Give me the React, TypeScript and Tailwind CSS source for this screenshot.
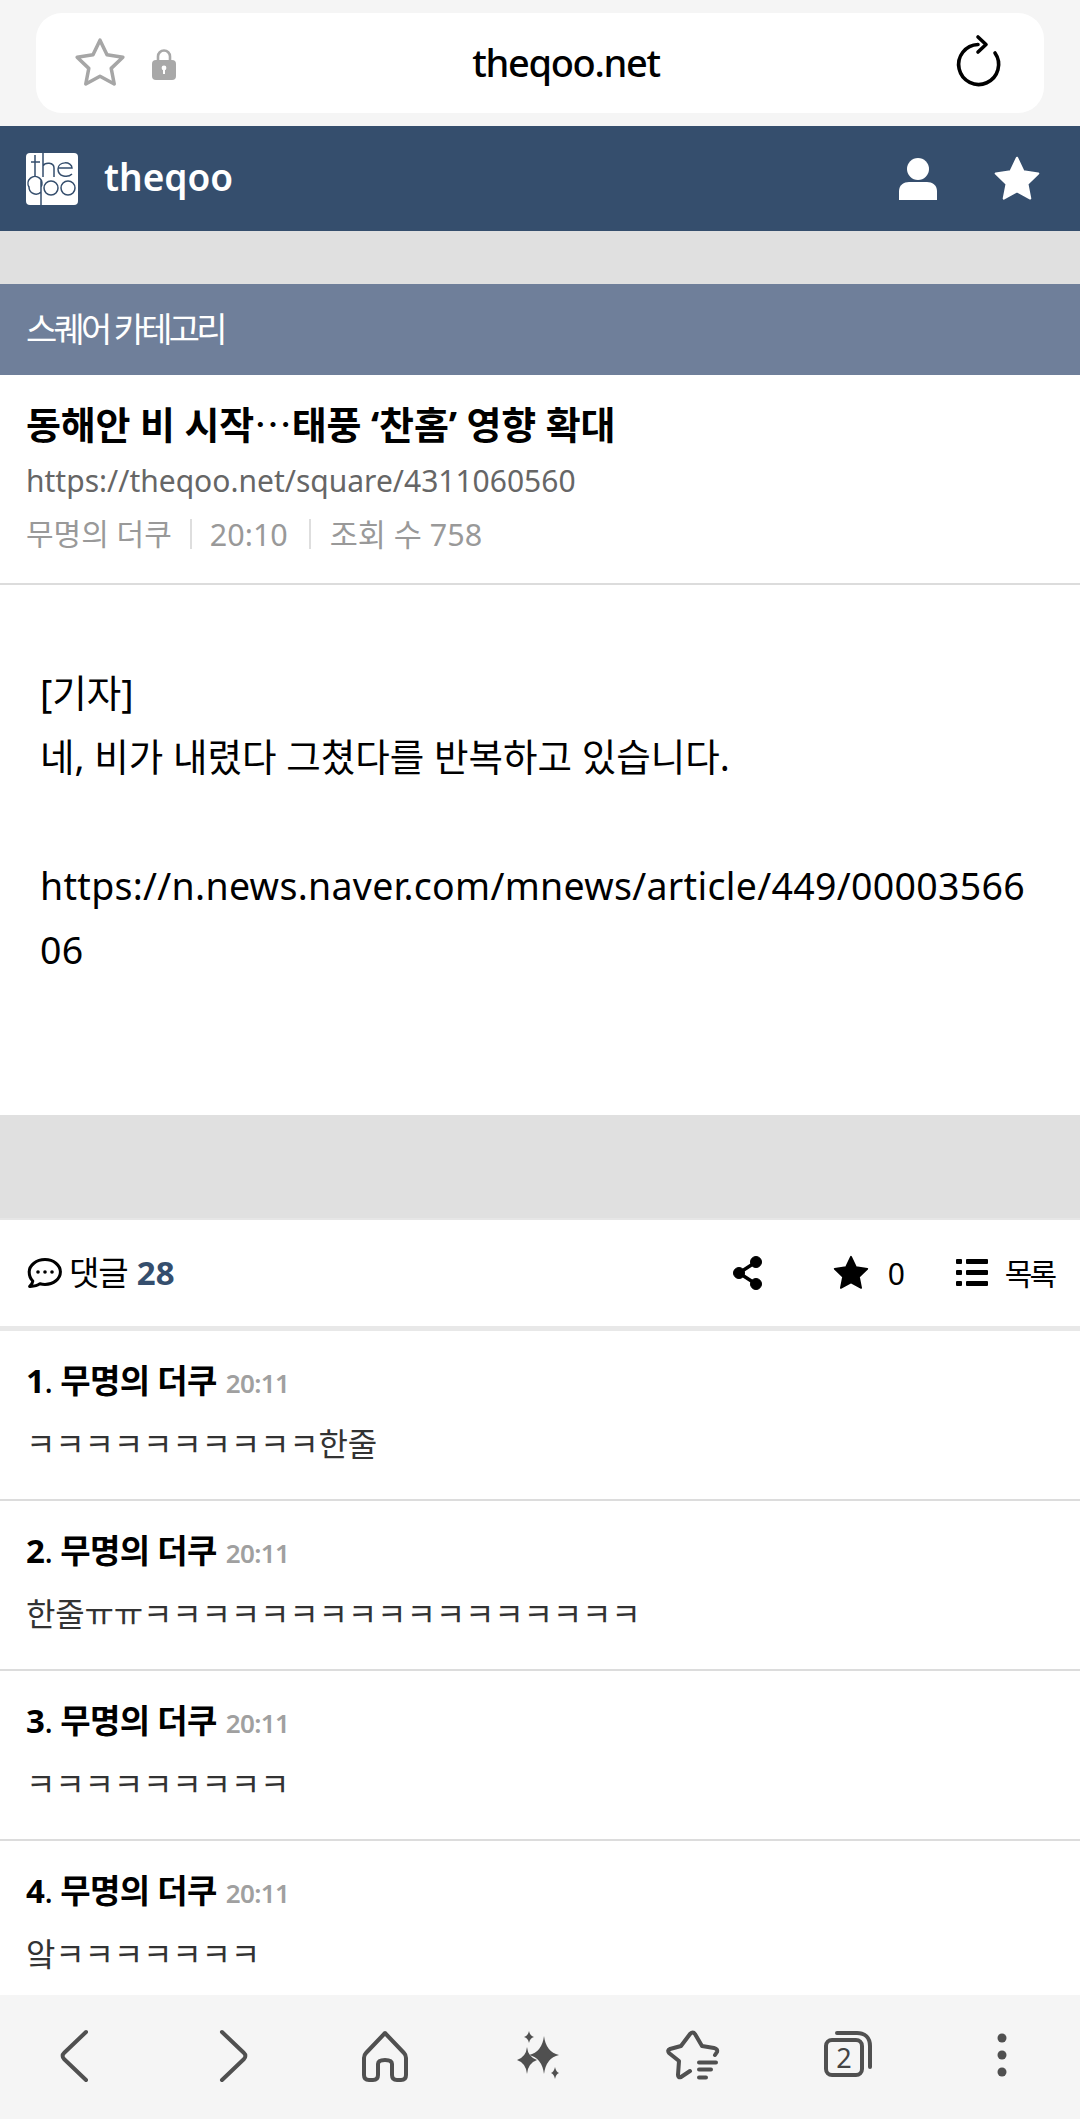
import React from 'react';

const FONT = '"Noto Sans", "Noto Sans CJK KR", sans-serif';
const STAR = 'M12 2.2l3 6.3 6.8 1-5 4.8 1.3 6.7-6.1-3.3-6.1 3.3 1.3-6.7-5-4.8 6.8-1z';

const comments = [
  { no: 1, text: 'ㅋㅋㅋㅋㅋㅋㅋㅋㅋㅋ한줄' },
  { no: 2, text: '한줄ㅠㅠㅋㅋㅋㅋㅋㅋㅋㅋㅋㅋㅋㅋㅋㅋㅋㅋㅋ' },
  { no: 3, text: 'ㅋㅋㅋㅋㅋㅋㅋㅋㅋ' },
  { no: 4, text: '앜ㅋㅋㅋㅋㅋㅋㅋ' }
];

const NavIcon: React.FC<{ children: React.ReactNode; className: string }> = ({ children, className }) => (
  <svg viewBox="0 0 60 60" className={`h-[60px] w-[60px] shrink-0 ${className}`} fill="none" stroke="#505050" strokeWidth="4" strokeLinecap="round" strokeLinejoin="round">
    {children}
  </svg>
);

export default function App() {
  return (
    <div className="flex h-[2119px] w-[1080px] flex-col overflow-hidden bg-white" style={{ fontFamily: FONT }}>
      {/* Browser bar */}
      <div className="h-[126px] shrink-0 bg-[#f5f5f5] px-[36px] pt-[13px]">
        <div className="relative flex h-[100px] items-center justify-center rounded-[26px] bg-white pl-[52px]">
          <svg viewBox="0 0 24 24" className="absolute left-[36px] top-[22px] h-[56px] w-[56px]" fill="none" stroke="#a6a6a6" strokeWidth="1.5" strokeLinejoin="round">
            <path d={STAR} />
          </svg>
          <svg viewBox="0 0 24 32" className="absolute left-[116px] top-[35px] h-[32px] w-[24px]">
            <path d="M6 14V8.5a6 6 0 0 1 12 0V14" fill="none" stroke="#a8a8a8" strokeWidth="2.6" />
            <rect x="0" y="12" width="24" height="20" rx="4" fill="#a8a8a8" />
            <circle cx="12" cy="20" r="2.4" fill="#fff" />
            <rect x="11" y="20" width="2" height="6" fill="#fff" />
          </svg>
          <span className="pb-[3px] text-[38px] font-medium leading-none tracking-[-0.035em] text-black">theqoo.net</span>
          <svg viewBox="0 0 50 56" className="absolute right-[39px] top-[21px] h-[56px] w-[50px]" fill="none" stroke="#000" strokeWidth="3.6" strokeLinecap="round" strokeLinejoin="round">
            <path d="M40 19A20 20 0 1 1 23 10.5" />
            <path d="M23 3l8 7.500-8 7.500" />
          </svg>
        </div>
      </div>

      {/* Site header */}
      <div className="flex h-[105px] shrink-0 items-center bg-[#354e6d] pl-[26px] pr-[37px]">
        <div className="mr-[26px] h-[52px] w-[52px] overflow-hidden rounded-[4px] bg-white">
          <svg viewBox="0 0 52 52" className="h-full w-full" fill="none" stroke="#354e6d" strokeWidth="1.5">
            <path d="M9 2v22M5 9h9M17 0v24M17 13c2-4 11-4 11 2v9M32 15h14c0-7-14-7-14 1s10 9 14 5" />
            <path d="M15 34a7 7 0 1 0-12 0a7 7 0 0 0 12 5M15 27v25M18 35a7 7 0 1 0 14 0a7 7 0 1 0-14 0M35 35a7 7 0 1 0 14 0a7 7 0 1 0-14 0" />
          </svg>
        </div>
        <span className="flex-1 pb-[4px] text-[37px] font-semibold leading-none text-white">theqoo</span>
        <svg viewBox="0 0 38 42" className="mr-[54px] h-[42px] w-[38px]" fill="#fff">
          <ellipse cx="19" cy="11" rx="11" ry="11" />
          <path d="M0 42V33c0-6 5-9 10-9h18c5 0 10 3 10 9v9z" />
        </svg>
        <svg viewBox="0 0 24 24" className="h-[52px] w-[52px]" fill="#fff" stroke="#fff" strokeWidth="1" strokeLinejoin="round">
          <path d={STAR} />
        </svg>
      </div>

      <div className="h-[53px] shrink-0 bg-[#e0e0e0]" />

      {/* Category */}
      <div className="flex h-[91px] shrink-0 items-center bg-[#6f7f9a] px-[26px] text-[34px] tracking-[-0.11em] text-white">
        스퀘어 카테고리
      </div>

      {/* Title block */}
      <div className="h-[210px] shrink-0 border-b-2 border-[#dcdcdc] px-[26px] pt-[23px]">
        <div className="text-[38px] font-bold leading-[50px] tracking-[-0.005em] text-black">
          동해안 비 시작<span className="font-['Noto_Sans_CJK_SC'] font-normal">…</span>태풍 ‘찬홈’ 영향 확대
        </div>
        <div className="mt-[10px] text-[30px] leading-[44px] text-[#666]">https://theqoo.net/square/4311060560</div>
        <div className="mt-[9px] flex items-center text-[30px] leading-[44px] text-[#999]">
          <span>무명의 더쿠</span>
          <span className="mx-[18px] h-[30px] w-[2px] bg-[#dedede]" />
          <span className="text-[30.500px]">20:10</span>
          <span className="ml-[21px] mr-[19px] h-[30px] w-[2px] bg-[#dedede]" />
          <span className="text-[30.500px]">조회 수 758</span>
        </div>
      </div>

      {/* Article */}
      <div className="h-[530px] shrink-0 px-[40px] pt-[76px] text-[37.500px] leading-[63.500px] text-black">
        <div>[기자]</div>
        <div>네, 비가 내렸다 그쳤다를 반복하고 있습니다.</div>
        <div className="h-[66px]" />
        <div className="break-all tracking-[0.3px]">https://n.news.naver.com/mnews/article/449/0000356606</div>
      </div>

      <div className="h-[105px] shrink-0 border-b-2 border-[#e6e6e6] bg-[#e0e0e0]" />

      {/* Comment toolbar */}
      <div className="flex h-[111px] shrink-0 items-center border-b-[5px] border-[#e8e8e8] px-[26px] text-[31px] text-black">
        <svg viewBox="0 0 36 30" className="mr-[7px] h-[30px] w-[36px]" fill="none" stroke="#000" strokeWidth="3" strokeLinejoin="round">
          <path d="M19 1.600c8.600 0 15.400 5.600 15.400 12.400S27.600 26.400 19 26.400c-1.800 0-3.400-.2-5-.7-2.400 2-6 2.800-10.400 2.700 1.800-1.400 3-3.400 3.200-5.400-2.500-2.300-3.600-5-3.600-9C3.200 7.200 10.400 1.600 19 1.600z" />
          <circle cx="12" cy="14" r="1.800" fill="#000" stroke="none" />
          <circle cx="19" cy="14" r="1.800" fill="#000" stroke="none" />
          <circle cx="26" cy="14" r="1.800" fill="#000" stroke="none" />
        </svg>
        <span className="text-[33px] tracking-[-0.03em]">댓글</span>
        <span className="ml-[9px] flex-1 text-[33px] font-bold text-[#354e6d]">28</span>
        <svg viewBox="0 0 30 34" className="mr-[68px] h-[34px] w-[30px]" fill="#000" stroke="#000">
          <circle cx="23" cy="6" r="5.500" />
          <circle cx="6" cy="17" r="5.500" />
          <circle cx="23" cy="28" r="5.500" />
          <path d="M6 17L23 6M6 17l17 11" strokeWidth="3.500" />
        </svg>
        <svg viewBox="0 0 24 24" className="mr-[17px] h-[40px] w-[40px]" fill="#000" stroke="#000" strokeWidth="1" strokeLinejoin="round">
          <path d={STAR} />
        </svg>
        <span className="mr-[51px] text-[30px]">0</span>
        <svg viewBox="0 0 32 28" className="mr-[17px] h-[28px] w-[32px]" fill="#000">
          <rect x="0" y="0" width="6" height="5" rx="1" />
          <rect x="10" y="0" width="22" height="5" rx="1" />
          <rect x="0" y="11" width="6" height="5" rx="1" />
          <rect x="10" y="11" width="22" height="5" rx="1" />
          <rect x="0" y="22" width="6" height="5" rx="1" />
          <rect x="10" y="22" width="22" height="5" rx="1" />
        </svg>
        <span className="text-[30px] tracking-[-0.1em]">목록</span>
      </div>

      {/* Comments */}
      <div className="min-h-0 flex-1 overflow-hidden">
        {comments.map((c) => (
          <div key={c.no} className="h-[170px] border-b-2 border-[#dcdcdc] px-[26px] pt-[27px]">
            <div className="flex items-baseline text-[33px] font-bold leading-[46px] tracking-[-0.02em] text-black">
              <span>
                {c.no}
                <span className="font-normal">.</span> 무명의 더쿠
              </span>
              <span className="ml-[9px] text-[26px] font-semibold text-[#a0a0a0]">20:11</span>
            </div>
            <div className="mt-[15px] text-[32px] leading-[46px] tracking-[-0.18px] text-[#333]">{c.text}</div>
          </div>
        ))}
      </div>

      {/* Browser nav */}
      <div className="flex h-[124px] shrink-0 items-center bg-[#f5f5f5] pb-[2px]">
        <NavIcon className="ml-[44px]"><path d="M42 6L20 27a4 4 0 0 0 0 6L42 54" /></NavIcon>
        <NavIcon className="ml-[100px]"><path d="M18 6L40 27a4 4 0 0 1 0 6L18 54" /></NavIcon>
        <NavIcon className="ml-[91px]">
          <path d="M30 7L11 27q-2 2-2 5v17q0 5 5 5h4q5 0 5-5V38q0-4 7-4t7 4v11q0 5 5 5h4q5 0 5-5V32q0-3-2-5z" />
        </NavIcon>
        <NavIcon className="ml-[93px]">
          <g fill="#505050" stroke="none">
            <path d="M36 10Q38 26 51 29Q38 32 36 48Q34 32 21 29Q34 26 36 10z" />
            <path d="M21 5Q22 10 26 11Q22 12 21 17Q20 12 16 11Q20 10 21 5z" />
            <path d="M19 21Q20 31 29 34Q20 37 19 48Q18 37 9 34Q18 31 19 21z" />
            <path d="M47 41Q48 46 51 47Q48 48 47 53Q46 48 43 47Q46 46 47 41z" />
          </g>
        </NavIcon>
        <NavIcon className="ml-[95px]">
          <path d="M27 45L18 51Q15 52 15 49L16 35 6 27Q4 24 7 23L18 20 27 8Q30 5 32 8L39 20 51 22Q55 23 54 26L52 29" />
          <g stroke="none" fill="#505050">
            <rect x="34" y="34.500" width="21" height="4" rx="2" />
            <rect x="34" y="41.500" width="16" height="4" rx="2" />
            <rect x="34" y="49.500" width="11" height="4" rx="2" />
          </g>
        </NavIcon>
        <div className="relative ml-[94px] h-[60px] w-[60px] shrink-0">
          <svg viewBox="0 0 60 60" className="h-full w-full" fill="none" stroke="#505050" strokeWidth="4" strokeLinecap="round">
            <rect x="9" y="14" width="36" height="35" rx="6" />
            <path d="M20 7h20c8 0 13 5 13 13v21" />
          </svg>
          <span className="absolute left-[9px] top-[14px] flex h-[35px] w-[36px] items-center justify-center text-[27px] leading-none text-[#444]">2</span>
        </div>
        <NavIcon className="ml-[95px]">
          <g fill="#505050" stroke="none">
            <ellipse cx="30" cy="12" rx="4.500" ry="4.500" />
            <ellipse cx="30" cy="29" rx="4.500" ry="4.500" />
            <ellipse cx="30" cy="46" rx="4.500" ry="4.500" />
          </g>
        </NavIcon>
      </div>
    </div>
  );
}
